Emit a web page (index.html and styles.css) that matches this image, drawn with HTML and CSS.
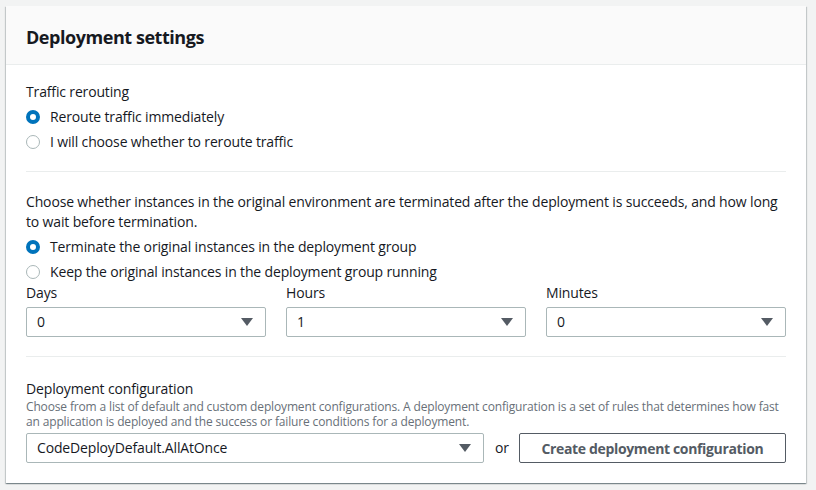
FILE: index.html
```html
<!DOCTYPE html>
<html>
<head>
<meta charset="utf-8">
<link rel="stylesheet" href="styles.css">
</head>
<body>
<div class="card">
  <div class="card-header"><h2 class="title">Deployment settings</h2></div>
  <div class="card-body">
    <div class="section">
      <div class="label">Traffic rerouting</div>
      <div class="radio checked"><span class="dot"></span><span>Reroute traffic immediately</span></div>
      <div class="radio"><span class="dot"></span><span>I will choose whether to reroute traffic</span></div>
    </div>
    <div class="divider"></div>
    <div class="section">
      <p class="para">Choose whether instances in the original environment are terminated after the deployment is succeeds, and how long to wait before termination.</p>
      <div class="radio checked"><span class="dot"></span><span>Terminate the original instances in the deployment group</span></div>
      <div class="radio"><span class="dot"></span><span>Keep the original instances in the deployment group running</span></div>
      <div class="time-grid">
        <div class="field">
          <div class="label">Days</div>
          <div class="select"><span>0</span><span class="caret"></span></div>
        </div>
        <div class="field">
          <div class="label">Hours</div>
          <div class="select"><span>1</span><span class="caret"></span></div>
        </div>
        <div class="field">
          <div class="label">Minutes</div>
          <div class="select"><span>0</span><span class="caret"></span></div>
        </div>
      </div>
    </div>
    <div class="divider divider-low"></div>
    <div class="section">
      <div class="label">Deployment configuration</div>
      <div class="desc">Choose from a list of default and custom deployment configurations. A deployment configuration is a set of rules that determines how fast an application is deployed and the success or failure conditions for a deployment.</div>
      <div class="config-row">
        <div class="select config-select"><span>CodeDeployDefault.AllAtOnce</span><span class="caret"></span></div>
        <span class="or">or</span>
        <button class="btn">Create deployment configuration</button>
      </div>
    </div>
  </div>
</div>
</body>
</html>
```
FILE: styles.css
```css
* { box-sizing: border-box; }
html, body { margin: 0; }
body {
  background: #f2f3f3;
  padding: 6px 10px 6px 6px;
  font-family: "Open Sans", "Noto Sans", sans-serif;
  font-size: 14px;
  line-height: 20px;
  letter-spacing: -0.15px;
  color: #16191f;
}
.card {
  background: #fff;
  box-shadow: 0 1px 1px 0 rgba(0,28,36,.3), 1px 1px 1px 0 rgba(0,28,36,.15), -1px 1px 1px 0 rgba(0,28,36,.15);
}
.card-header {
  background: #fafafa;
  border-bottom: 1px solid #eaeded;
  padding: 20px 20px 16px;
}
.title {
  margin: 0;
  font-size: 18px;
  line-height: 22px;
  font-weight: 700;
  letter-spacing: -0.45px;
}
.card-body {
  padding: 17px 20px 20px;
}
.label { line-height: 20px; }
.radio {
  display: flex;
  align-items: center;
  gap: 10px;
  margin-top: 5px;
  line-height: 20px;
}
.dot {
  width: 14px;
  height: 14px;
  border-radius: 50%;
  border: 1px solid #aab7b8;
  flex: none;
  background: #fff;
}
.radio.checked .dot {
  border: 4px solid #0073bb;
}
.divider {
  height: 1px;
  background: #eaeded;
  margin: 19px 0 20px;
}
.divider-low { margin-bottom: 22px; }
.para { margin: 0; }
.time-grid {
  display: grid;
  grid-template-columns: 1fr 1fr 1fr;
  gap: 20px;
  margin-top: 1px;
}
.field .label { margin-bottom: 4px; }
.select {
  height: 30px;
  border: 1px solid #aab7b8;
  border-radius: 2px;
  display: flex;
  align-items: center;
  justify-content: space-between;
  padding: 0 12px 0 10px;
}
.caret {
  width: 0;
  height: 0;
  border-left: 6px solid transparent;
  border-right: 6px solid transparent;
  border-top: 8px solid #545b64;
}
.desc {
  font-size: 12px;
  line-height: 15px;
  color: #687078;
  margin-top: 0;
  margin-bottom: 4px;
}
.config-row {
  display: flex;
  align-items: center;
}
.config-select { width: 458px; flex: none; }
.or { margin: 0 10px 0 11px; }
.btn {
  flex: 1;
  height: 30px;
  border: 1px solid #545b64;
  border-radius: 2px;
  background: #fff;
  color: #545b64;
  font-family: inherit;
  font-size: 14px;
  font-weight: 700;
  letter-spacing: -0.35px;
  white-space: nowrap;
  padding: 0;
}
```
